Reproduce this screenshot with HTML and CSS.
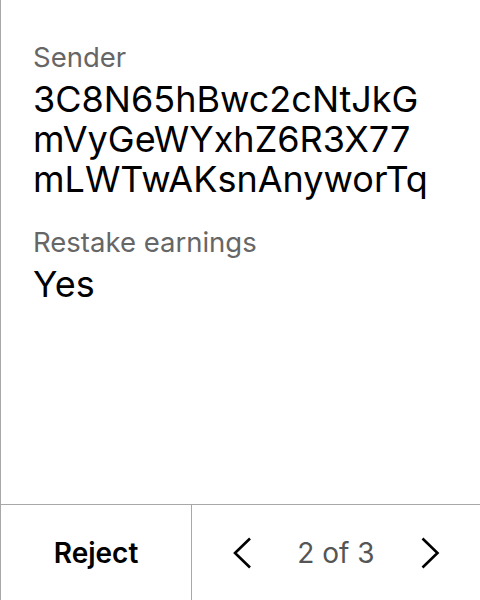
FILE: index.html
```html
<!DOCTYPE html>
<html>
<head>
<meta charset="utf-8">
<link rel="stylesheet" href="styles.css">
</head>
<body>
<div class="screen">
  <main class="content">
    <div class="field">
      <div class="label">Sender</div>
      <div class="value address">3C8N65hBwc2cNtJkG<br>mVyGeWYxhZ6R3X77<br>mLWTwAKsnAnyworTq</div>
    </div>
    <div class="field">
      <div class="label">Restake earnings</div>
      <div class="value">Yes</div>
    </div>
  </main>
  <footer class="footer">
    <div class="reject">Reject</div>
    <div class="pager">
      <svg class="chev" viewBox="0 0 20 32" width="20" height="32"><path d="M18 1.5 L3 16 L18 30.5" fill="none" stroke="#000" stroke-width="2.6"/></svg>
      <span class="count">2 of 3</span>
      <svg class="chev" viewBox="0 0 20 32" width="20" height="32"><path d="M2.5 1.5 L17.5 16 L2.5 30.5" fill="none" stroke="#000" stroke-width="2.6"/></svg>
    </div>
  </footer>
</div>
</body>
</html>
```

FILE: styles.css
```css
* { box-sizing: border-box; }
html, body { margin: 0; padding: 0; background: #fff; }
body { font-family: Inter, "Noto Sans", sans-serif; color: #000; }
.screen {
  width: 480px;
  height: 600px;
  display: flex;
  flex-direction: column;
  border-left: 1px solid #a8a8a8;
}
.content {
  flex: 1;
  padding: 40px 0 0 32px;
  display: flex;
  flex-direction: column;
  gap: 26px;
}
.label {
  font-size: 27.5px;
  line-height: 34px;
  color: #666;
  margin-bottom: 5px;
}
.value {
  font-size: 36px;
  line-height: 40px;
  color: #000;
}
.footer {
  height: 96px;
  border-top: 1px solid #a8a8a8;
  display: flex;
}
.reject {
  width: 191px;
  border-right: 1px solid #a8a8a8;
  display: flex;
  align-items: center;
  justify-content: center;
  font-size: 28px;
  font-weight: 600;
}
.pager {
  flex: 1;
  display: flex;
  align-items: center;
  justify-content: space-between;
  padding: 0 40px;
}
.count {
  font-size: 28px;
  color: #555;
}
```
